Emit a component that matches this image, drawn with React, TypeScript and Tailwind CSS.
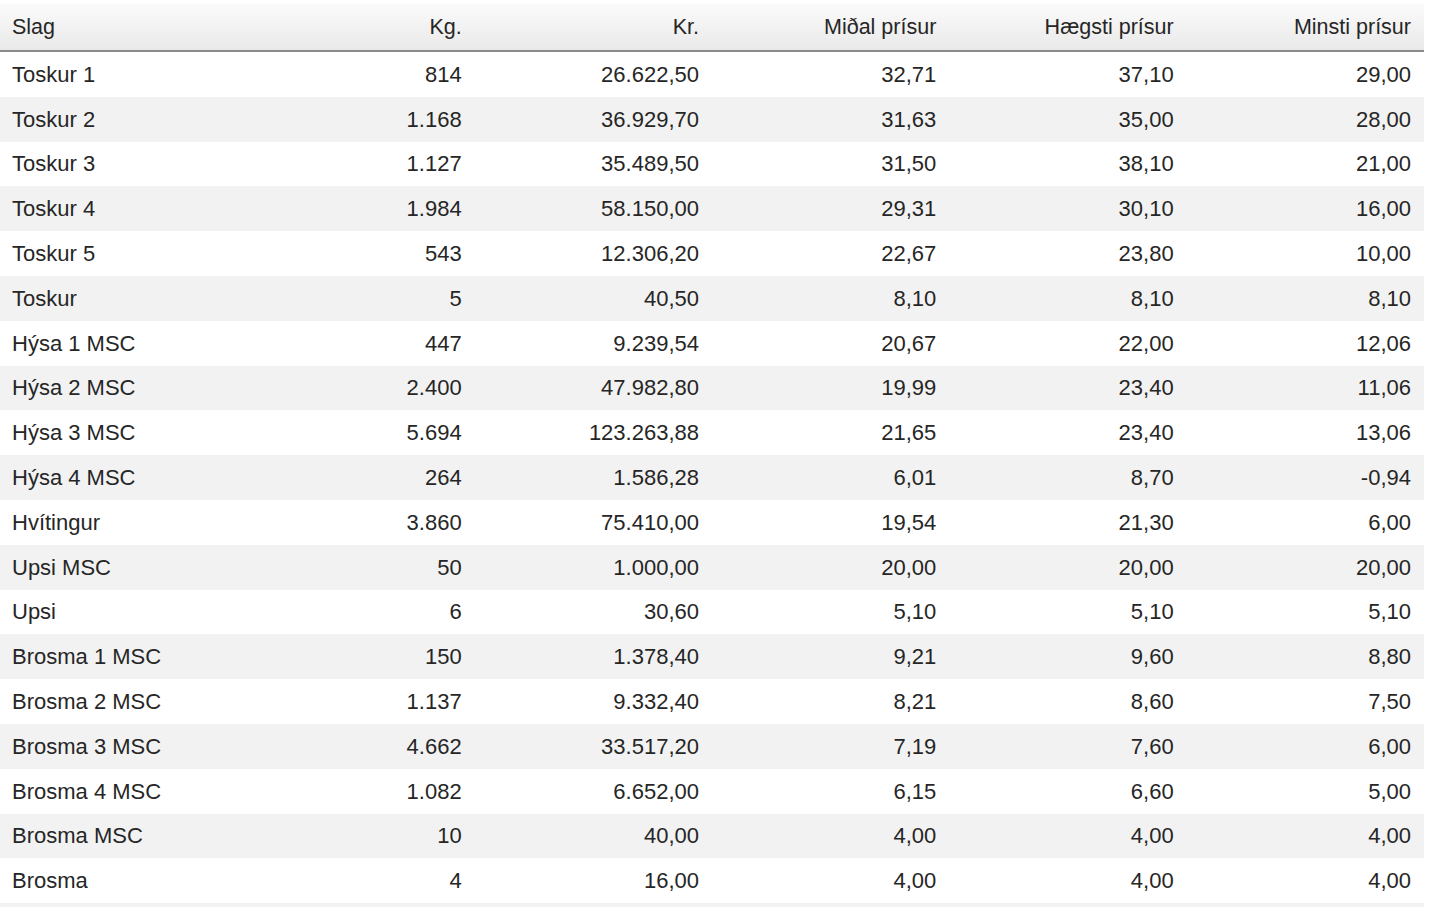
const rows: string[][] = [
  ['Toskur 1', '814', '26.622,50', '32,71', '37,10', '29,00'],
  ['Toskur 2', '1.168', '36.929,70', '31,63', '35,00', '28,00'],
  ['Toskur 3', '1.127', '35.489,50', '31,50', '38,10', '21,00'],
  ['Toskur 4', '1.984', '58.150,00', '29,31', '30,10', '16,00'],
  ['Toskur 5', '543', '12.306,20', '22,67', '23,80', '10,00'],
  ['Toskur', '5', '40,50', '8,10', '8,10', '8,10'],
  ['Hýsa 1 MSC', '447', '9.239,54', '20,67', '22,00', '12,06'],
  ['Hýsa 2 MSC', '2.400', '47.982,80', '19,99', '23,40', '11,06'],
  ['Hýsa 3 MSC', '5.694', '123.263,88', '21,65', '23,40', '13,06'],
  ['Hýsa 4 MSC', '264', '1.586,28', '6,01', '8,70', '-0,94'],
  ['Hvítingur', '3.860', '75.410,00', '19,54', '21,30', '6,00'],
  ['Upsi MSC', '50', '1.000,00', '20,00', '20,00', '20,00'],
  ['Upsi', '6', '30,60', '5,10', '5,10', '5,10'],
  ['Brosma 1 MSC', '150', '1.378,40', '9,21', '9,60', '8,80'],
  ['Brosma 2 MSC', '1.137', '9.332,40', '8,21', '8,60', '7,50'],
  ['Brosma 3 MSC', '4.662', '33.517,20', '7,19', '7,60', '6,00'],
  ['Brosma 4 MSC', '1.082', '6.652,00', '6,15', '6,60', '5,00'],
  ['Brosma MSC', '10', '40,00', '4,00', '4,00', '4,00'],
  ['Brosma', '4', '16,00', '4,00', '4,00', '4,00'],
];

const headers = ['Slag', 'Kg.', 'Kr.', 'Miðal prísur', 'Hægsti prísur', 'Minsti prísur'];

export default function App() {
  return (
    <div className="w-[1440px] h-[907px] overflow-hidden bg-white pt-1 font-['Liberation_Sans',Arial,sans-serif] text-[#262626]">
      <div className="w-[1424px]">
        {/* header */}
        <div className="grid grid-cols-6 h-[48px] items-center text-[21.5px] bg-gradient-to-b from-[#fbfbfb] to-[#e9e9e9] border-b-2 border-[#8a8a8a]">
          {headers.map((h, i) => (
            <div key={h} className={i === 0 ? 'pl-3 pt-px' : 'pr-[13px] pt-px text-right'}>
              {h}
            </div>
          ))}
        </div>

        {rows.map((r, idx) => (
          <div
            key={r[0]}
            className={`grid grid-cols-6 h-[44.8px] items-center text-[22px] ${
              idx % 2 === 1 ? 'bg-[#f2f2f2]' : 'bg-white'
            }`}
          >
            {r.map((c, i) => (
              <div key={i} className={i === 0 ? 'pl-3' : 'pr-[13px] text-right'}>
                {c}
              </div>
            ))}
          </div>
        ))}
        <div className="h-4 bg-[#f2f2f2]" />
      </div>
    </div>
  );
}
